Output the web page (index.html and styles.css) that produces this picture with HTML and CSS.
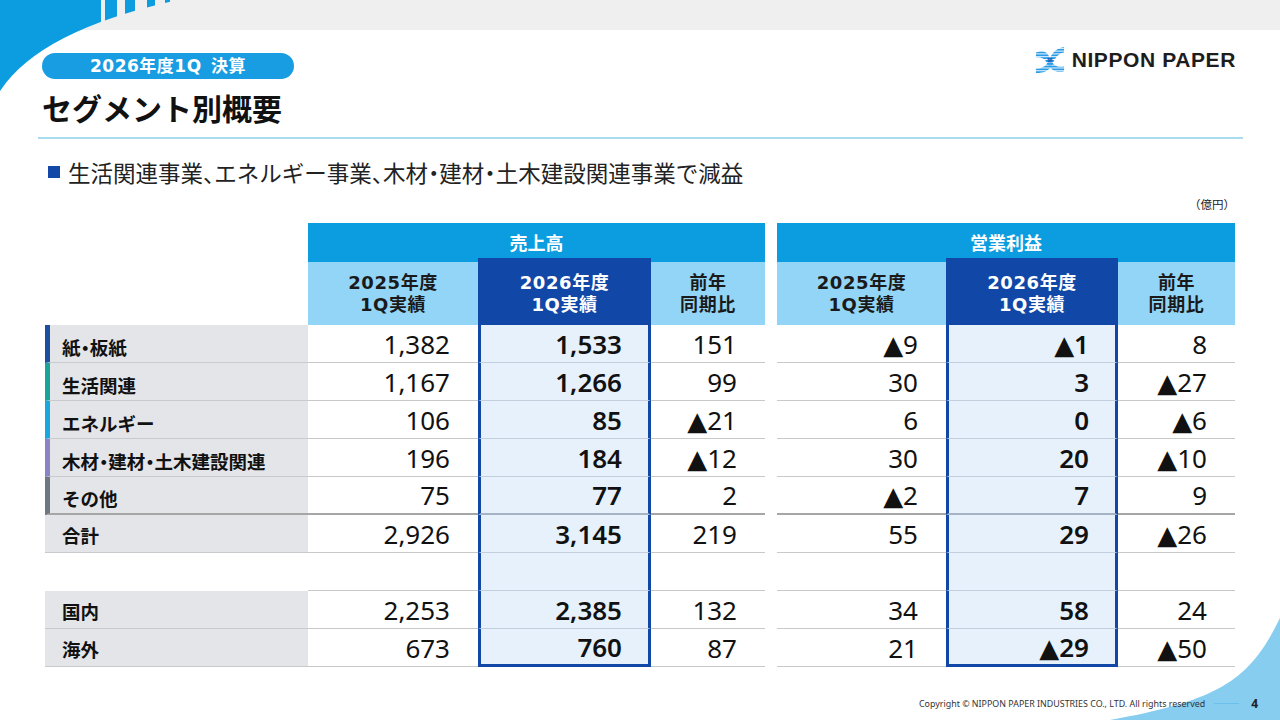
FILE: index.html
```html
<!DOCTYPE html>
<html lang="ja">
<head>
<meta charset="utf-8">
<title>セグメント別概要</title>
<link rel="stylesheet" href="styles.css">
</head>
<body>
<div class="page">
  <svg class="deco" width="1280" height="720" viewBox="0 0 1280 720" aria-hidden="true">
    <rect x="0" y="0" width="1280" height="30" fill="#efefef"/>
    <path d="M0,0 L178,0 Q40,30 0,91 Z" fill="#0b9de0"/>
    <rect x="101" y="0" width="4" height="30" fill="#efefef"/>
    <rect x="117" y="0" width="8" height="30" fill="#efefef"/>
    <rect x="135" y="0" width="12" height="30" fill="#efefef"/>
    <rect x="155" y="0" width="10" height="30" fill="#efefef"/>
    <rect x="170" y="0" width="10" height="30" fill="#efefef"/>
    <path d="M1280,618 C1250,680 1220,700 1110,720 L1280,720 Z" fill="#86cdf0"/>
  </svg>

  <header class="head">
    <div class="head-left">
      <div class="pill">2026年度1Q 決算</div>
      <h1 class="title">セグメント別概要</h1>
    </div>
    <div class="logo">
      <svg class="logo-mark" width="30" height="30" viewBox="0 0 32 30" aria-hidden="true">
        <defs>
          <pattern id="stripe" width="32" height="3" patternUnits="userSpaceOnUse">
            <rect width="32" height="2" fill="#2b9be6"/>
          </pattern>
        </defs>
        <path d="M1,7 C9,4 13,6 16,13 C19,21 24,23 31,22 L31,27 C23,29 17,26 13,19 C11,14 8,12 1,12 Z" fill="url(#stripe)"/>
        <path d="M31,1 C24,2 19,6 16,13 C13,21 8,24 1,24 L1,29 C10,29 16,26 19,19 C21,13 25,8 31,7 Z" fill="url(#stripe)"/>
        <path d="M13.5,12.5 L18.5,12.5 L18.5,17.5 L13.5,17.5 Z" fill="#1a5fba" opacity="0.8"/>
      </svg>
      <span class="logo-text">NIPPON PAPER</span>
    </div>
  </header>
  <div class="rule"></div>

  <p class="lead"><span class="sq"></span>生活関連事業<span class="pn">、</span>エネルギー事業<span class="pn">、</span>木材<span class="pn">・</span>建材<span class="pn">・</span>土木建設関連事業で減益</p>
  <div class="unit">（億円）</div>

  <div class="tbl">
    <div class="blank"></div>
    <div class="band span3">売上高</div>
    <div class="gapc"></div>
    <div class="band span3">営業利益</div>

    <div class="blank"></div>
    <div class="hl">2025年度<br>1Q実績</div>
    <div class="hd">2026年度<br>1Q実績</div>
    <div class="hl">前年<br>同期比</div>
    <div class="gapc"></div>
    <div class="hl">2025年度<br>1Q実績</div>
    <div class="hd">2026年度<br>1Q実績</div>
    <div class="hl">前年<br>同期比</div>

    <div class="lab seg c-paper">紙<span class="pn">・</span>板紙</div>
    <div class="n">1,382</div><div class="n hi">1,533</div><div class="n">151</div>
    <div class="gapc"></div>
    <div class="n">▲9</div><div class="n hi">▲1</div><div class="n">8</div>

    <div class="lab seg c-life">生活関連</div>
    <div class="n">1,167</div><div class="n hi">1,266</div><div class="n">99</div>
    <div class="gapc"></div>
    <div class="n">30</div><div class="n hi">3</div><div class="n">▲27</div>

    <div class="lab seg c-energy">エネルギー</div>
    <div class="n">106</div><div class="n hi">85</div><div class="n">▲21</div>
    <div class="gapc"></div>
    <div class="n">6</div><div class="n hi">0</div><div class="n">▲6</div>

    <div class="lab seg c-wood">木材<span class="pn">・</span>建材<span class="pn">・</span>土木建設関連</div>
    <div class="n">196</div><div class="n hi">184</div><div class="n">▲12</div>
    <div class="gapc"></div>
    <div class="n">30</div><div class="n hi">20</div><div class="n">▲10</div>

    <div class="lab seg c-other sep">その他</div>
    <div class="n sep">75</div><div class="n hi sep">77</div><div class="n sep">2</div>
    <div class="gapc"></div>
    <div class="n sep">▲2</div><div class="n hi sep">7</div><div class="n sep">9</div>

    <div class="lab">合計</div>
    <div class="n">2,926</div><div class="n hi">3,145</div><div class="n">219</div>
    <div class="gapc"></div>
    <div class="n">55</div><div class="n hi">29</div><div class="n">▲26</div>

    <div class="lab empty"></div>
    <div class="n"></div><div class="n hi"></div><div class="n"></div>
    <div class="gapc"></div>
    <div class="n"></div><div class="n hi"></div><div class="n"></div>

    <div class="lab">国内</div>
    <div class="n">2,253</div><div class="n hi">2,385</div><div class="n">132</div>
    <div class="gapc"></div>
    <div class="n">34</div><div class="n hi">58</div><div class="n">24</div>

    <div class="lab">海外</div>
    <div class="n">673</div><div class="n hi last">760</div><div class="n">87</div>
    <div class="gapc"></div>
    <div class="n">21</div><div class="n hi last">▲29</div><div class="n">▲50</div>
  </div>

  <footer class="foot">
    <span class="copy">Copyright © NIPPON PAPER INDUSTRIES CO., LTD. All rights reserved</span>
    <span class="foot-line"></span>
    <span class="pageno">4</span>
  </footer>
</div>
</body>
</html>
```

FILE: styles.css
```css
* { box-sizing: border-box; }
html, body { margin: 0; padding: 0; background: #ffffff; }
body {
  font-family: "Noto Sans CJK JP", "Noto Sans", sans-serif;
  color: #111;
}
.page {
  position: relative;
  width: 1280px;
  height: 720px;
  overflow: hidden;
  background: #ffffff;
}
.deco {
  position: absolute;
  left: 0;
  top: 0;
  z-index: 0;
}
.head, .rule, .lead, .unit, .tbl, .foot { position: relative; z-index: 1; }

.pn { font-feature-settings: "halt"; }

.head {
  display: flex;
  justify-content: space-between;
  align-items: flex-start;
  padding: 53px 44px 0 42px;
}
.pill {
  width: 252px;
  height: 26px;
  border-radius: 13px;
  background: #189de2;
  color: #fff;
  font-family: "DejaVu Sans", "Noto Sans CJK JP", sans-serif;
  font-weight: 700;
  font-size: 17px;
  line-height: 26px;
  text-align: center;
  letter-spacing: 0.5px;
  word-spacing: 3px;
}
.title {
  margin: 8px 0 0 0;
  height: 40px;
  font-size: 30px;
  line-height: 40px;
  font-weight: 700;
  color: #111;
}
.logo {
  display: flex;
  align-items: center;
  gap: 7px;
  margin-top: -8px;
  height: 30px;
}
.logo-mark { display: block; }
.logo-text {
  font-family: "Liberation Sans", Arial, sans-serif;
  font-weight: 700;
  font-size: 21px;
  letter-spacing: 0.6px;
  color: #1d1d1d;
}
.rule {
  height: 2px;
  margin: 10px 37px 0 38px;
  background: #a9dcef;
}
.lead {
  margin: 19px 0 0 0;
  padding-left: 48px;
  height: 28px;
  display: flex;
  align-items: center;
  font-size: 22.5px;
  color: #222;
}
.sq {
  width: 12px;
  height: 12px;
  background: #1448a8;
  margin-right: 8px;
  flex: none;
}
.unit {
  margin-top: 10px;
  height: 16px;
  line-height: 16px;
  text-align: right;
  padding-right: 45px;
  font-size: 11.5px;
  color: #222;
}

.tbl {
  margin: 11px 0 0 45px;
  display: grid;
  grid-template-columns: 263px 170px 173px 114px 12px 169px 172px 117px;
  grid-template-rows: 35px 67px repeat(9, 38px);
  width: 1190px;
}
.span3 { grid-column: span 3; }
.band {
  background: #0b9de0;
  color: #fff;
  font-weight: 700;
  font-size: 18px;
  display: flex;
  align-items: center;
  justify-content: center;
  padding-top: 3px;
}
.hl, .hd {
  display: flex;
  align-items: center;
  justify-content: center;
  text-align: center;
  font-family: "DejaVu Sans", "Noto Sans CJK JP", sans-serif;
  font-weight: 700;
  font-size: 18px;
  line-height: 22px;
  letter-spacing: 0.6px;
}
.hl {
  background: #93d5f7;
  border-top: 4px solid #0b9de0;
  color: #1a1a1a;
}
.hd {
  background: #1147a6;
  color: #fff;
  padding-top: 4px;
}
.lab {
  display: flex;
  align-items: center;
  padding-left: 17px;
  padding-top: 2px;
  background: #e3e5e8;
  border-bottom: 1px solid #c8cacd;
  font-weight: 700;
  font-size: 18.5px;
  color: #111;
}
.lab.seg { padding-left: 12px; padding-top: 6px; border-left: 5px solid #888; }
.c-paper { border-left-color: #1d4f9f !important; }
.c-life { border-left-color: #1ba39a !important; }
.c-energy { border-left-color: #1aa7e0 !important; }
.c-wood { border-left-color: #8a84c4 !important; }
.c-other { border-left-color: #6d7881 !important; }
.lab.empty { background: transparent; border-bottom: none; }
.n {
  display: flex;
  align-items: center;
  justify-content: flex-end;
  padding-right: 28px;
  border-bottom: 1px solid #c9c9c9;
  font-family: "Noto Sans", "DejaVu Sans", sans-serif;
  font-size: 26px;
  color: #111;
}
.n.hi {
  background: #e6f1fc;
  border-left: 3px solid #1147a6;
  border-right: 3px solid #1147a6;
  border-bottom-color: #c3cfdd;
  padding-right: 26px;
  font-weight: 600;
}
.n.hi.last { border-bottom: 3px solid #1147a6; }
.sep { border-bottom: 2px solid #a6a6a6 !important; }
.n.hi.sep { border-bottom: 2px solid #a6b3c4 !important; }
.gapc { background: transparent; }

.foot {
  margin-top: 30px;
  height: 12px;
  display: flex;
  justify-content: flex-end;
  align-items: center;
  padding-right: 22px;
}
.copy {
  font-family: "Noto Sans", sans-serif;
  font-size: 8.9px;
  color: #333;
  white-space: nowrap;
}
.foot-line {
  width: 25px;
  height: 1px;
  background: #6cc0ea;
  margin: 0 12px 0 9px;
}
.pageno {
  font-family: "Noto Sans", sans-serif;
  font-weight: 700;
  font-size: 12px;
  color: #222;
}
```
